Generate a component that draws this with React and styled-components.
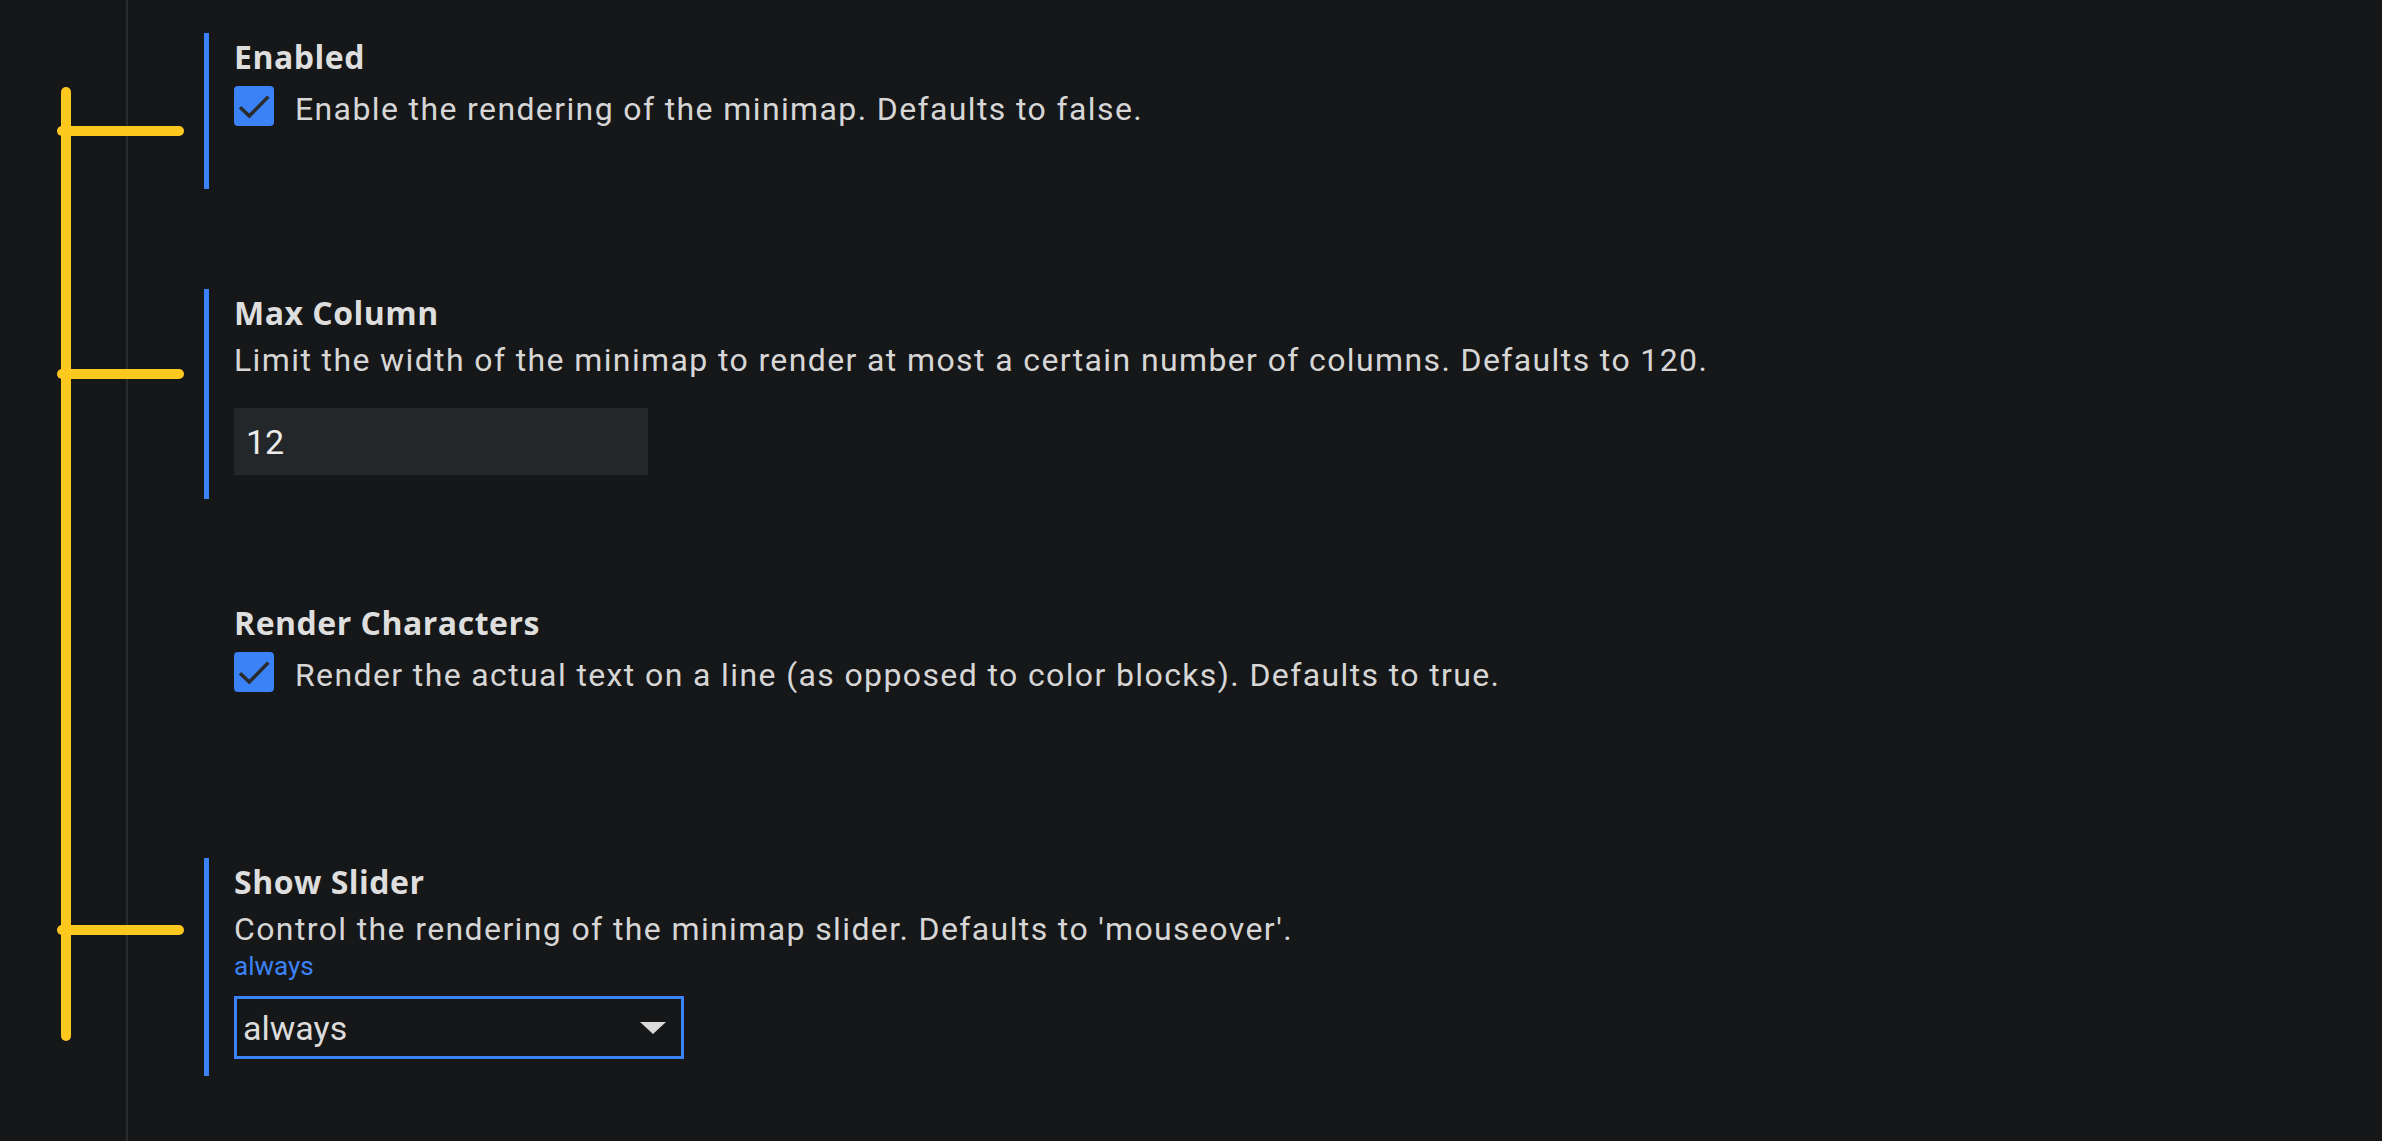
import React from "react";
import styled, { createGlobalStyle } from "styled-components";

const Global = createGlobalStyle`
  html, body { margin: 0; padding: 0; background: #161719; }
  body { font-family: Roboto, "Liberation Sans", sans-serif; }
  * { box-sizing: border-box; }
`;

const Page = styled.div`
  position: relative;
  display: flex;
  min-height: 1141px;
  background: #161719;
  overflow: hidden;
`;

const Gutter = styled.div`
  flex: 0 0 128px;
  border-right: 2px solid #2a2b2e;
`;

const List = styled.div`
  flex: 1;
  display: flex;
  flex-direction: column;
  gap: 100px;
  padding: 33px 0 0 76px;
`;

const Item = styled.section`
  display: flex;
  flex-direction: column;
  align-items: flex-start;
  border-left: 5px solid ${(p) => (p.$active ? "#3b82f6" : "transparent")};
  padding: 0 0 ${(p) => p.$pb}px 25px;
`;

const Title = styled.div`
  font-family: "Open Sans", "Noto Sans", sans-serif;
  font-weight: 700;
  font-size: 32px;
  line-height: 48px;
  letter-spacing: 0.5px;
  color: #dedede;
`;

const Desc = styled.div`
  font-family: Roboto, "Liberation Sans", sans-serif;
  font-size: 32px;
  line-height: 46px;
  letter-spacing: 1.38px;
  color: #d6d6d6;
`;

const CheckRow = styled.label`
  display: flex;
  align-items: flex-start;
  gap: 21px;
  margin-top: 5px;
`;

const Box = styled.span`
  flex: 0 0 40px;
  width: 40px;
  height: 40px;
  border-radius: 4px;
  background: #3b82f6;
  display: flex;
  align-items: center;
  justify-content: center;
`;

const NumberField = styled.div`
  margin-top: 25px;
  width: 414px;
  height: 67px;
  background: #24272a;
  color: #ececec;
  font-family: Roboto, "Liberation Sans", sans-serif;
  font-size: 34px;
  display: flex;
  align-items: center;
  padding-left: 12px;
`;

const Hint = styled.div`
  font-family: Roboto, "Liberation Sans", sans-serif;
  font-size: 26px;
  line-height: 28px;
  color: #3b82f6;
`;

const Select = styled.div`
  margin-top: 16px;
  width: 450px;
  height: 63px;
  border: 3px solid #3b82f6;
  display: flex;
  align-items: center;
  justify-content: space-between;
  padding: 0 15px 0 6px;
  color: #dcdcdc;
  font-family: Roboto, "Liberation Sans", sans-serif;
  font-size: 34px;
`;

const Annotation = styled.svg`
  position: absolute;
  left: 0;
  top: 0;
  pointer-events: none;
`;

const Check = () => (
  <svg width="40" height="40" viewBox="0 0 40 40">
    <path d="M6 21.3 L15.3 30 L34.3 10.6" fill="none" stroke="#2b2b2b" strokeWidth="3.5" />
  </svg>
);

const Caret = () => (
  <svg width="26" height="12" viewBox="0 0 26 12">
    <path d="M0 0 H26 L13 12 Z" fill="#dadada" />
  </svg>
);

export default function App() {
  return (
    <Page>
      <Global />
      <Gutter />
      <List>
        <Item $active $pb={57}>
          <Title>Enabled</Title>
          <CheckRow>
            <Box><Check /></Box>
            <Desc>Enable the rendering of the minimap. Defaults to false.</Desc>
          </CheckRow>
        </Item>
        <Item $active $pb={24}>
          <Title>Max Column</Title>
          <Desc>Limit the width of the minimap to render at most a certain number of columns. Defaults to 120.</Desc>
          <NumberField>12</NumberField>
        </Item>
        <Item $pb={60}>
          <Title>Render Characters</Title>
          <CheckRow>
            <Box><Check /></Box>
            <Desc>Render the actual text on a line (as opposed to color blocks). Defaults to true.</Desc>
          </CheckRow>
        </Item>
        <Item $active $pb={17}>
          <Title>Show Slider</Title>
          <Desc>Control the rendering of the minimap slider. Defaults to 'mouseover'.</Desc>
          <Hint>always</Hint>
          <Select>
            <span>always</span>
            <Caret />
          </Select>
        </Item>
      </List>
      <Annotation width="200" height="1141" viewBox="0 0 200 1141">
        <g stroke="#ffc81e" strokeWidth="10" strokeLinecap="round" fill="none">
          <line x1="66" y1="92" x2="66" y2="1036" />
          <line x1="62" y1="131" x2="179" y2="131" />
          <line x1="62" y1="374" x2="179" y2="374" />
          <line x1="62" y1="930" x2="179" y2="930" />
        </g>
      </Annotation>
    </Page>
  );
}
